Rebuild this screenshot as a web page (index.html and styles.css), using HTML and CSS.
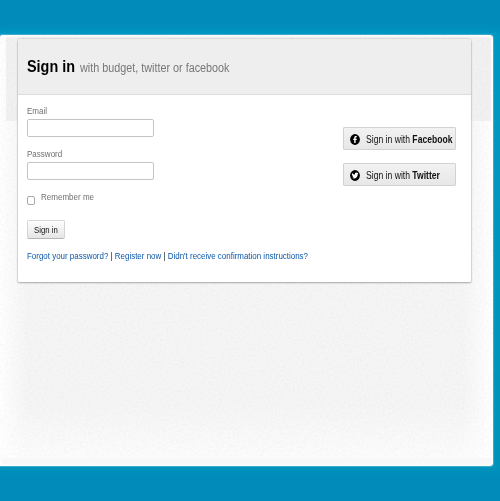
FILE: index.html
```html
<!DOCTYPE html>
<html lang="en">
<head>
<meta charset="utf-8">
<title>Sign in</title>
<link rel="stylesheet" href="styles.css">
</head>
<body>
<main class="page">
  <svg class="grain" aria-hidden="true"><filter id="grain"><feTurbulence type="fractalNoise" baseFrequency="0.45" numOctaves="2"/><feColorMatrix values="0 0 0 0 0.4  0 0 0 0 0.4  0 0 0 0 0.4  0.3 0 0 0 -0.12"/></filter><rect width="100%" height="100%" filter="url(#grain)"/></svg>
  <section class="card">
    <header class="head"><h1 class="t title">Sign in</h1><span class="t subtitle">with budget, twitter or facebook</span></header>
    <div class="body">
      <form class="form">
        <label class="label" for="email"><span class="t small">Email</span></label>
        <input class="field" id="email" type="text">
        <label class="label second" for="password"><span class="t small">Password</span></label>
        <input class="field" id="password" type="password">
        <div class="remember"><input class="check" id="remember" type="checkbox"><label class="t small" for="remember">Remember me</label></div>
        <button class="submit" type="button"><span class="t small">Sign in</span></button>
        <p class="links"><span class="t small"><a>Forgot your password?</a> | <a>Register now</a> | <a>Didn't receive confirmation instructions?</a></span></p>
      </form>
      <div class="social">
        <a class="provider"><svg class="icon" viewBox="0 0 10 11"><ellipse cx="5" cy="5.5" rx="4.9" ry="5.4"/><path fill="#fff" d="M4.2 9V6H3.2V4.7h1V3.8C4.2 2.6 4.8 2 5.8 2h1v1.2h-.6c-.4 0-.6.2-.6.6v.9h1.2L6.7 6H5.6v3z"/></svg><span class="t">Sign in with <b>Facebook</b></span></a>
        <a class="provider"><svg class="icon" viewBox="0 0 10 11"><ellipse cx="5" cy="5.5" rx="4.9" ry="5.4"/><path fill="#fff" d="M2.1 2.9c.8 1 1.7 1.5 2.8 1.6-.2-1.2.5-2 1.4-2 .5 0 .8.2 1.1.5l.9-.4-.5.9.6-.1-.7.8c0 2.5-1.5 4.2-3.6 4.2-.8 0-1.5-.2-2.1-.6.8 0 1.3-.2 1.8-.6-.7-.1-1.1-.5-1.3-1.1h.5c-.7-.2-1.1-.7-1.1-1.5l.5.2c-.6-.5-.7-1.2-.3-1.9z"/></svg><span class="t">Sign in with <b>Twitter</b></span></a>
      </div>
    </div>
  </section>
</main>
</body>
</html>
```
FILE: styles.css
```css
* { box-sizing: border-box; }
body {
  margin: 0;
  height: 501px;
  padding-top: 35px;
  overflow: hidden;
  font-family: "Liberation Sans", Arial, sans-serif;
  background: linear-gradient(#008bbb 0 24px, #0097c2 35px, #0092b8 466px, #008bbb 477px);
}
.page {
  position: relative;
  width: 493px;
  height: 431px;
  padding: 4px 0 0 18px;
  border-radius: 2px 3px 3px 0;
  background:
    linear-gradient(#f1f1f1, #f1f1f1) 6px 2px / 485px 84px no-repeat,
    linear-gradient(#f8f8f8, #f8f8f8) 0 423px / 100% 8px no-repeat,
    linear-gradient(90deg, #fff, rgba(255,255,255,0) 28px, rgba(255,255,255,0) 462px, #fff),
    linear-gradient(#f5f5f5 0 370px, #fcfcfc 423px);
  box-shadow: 0 0 0 1px #3fa9cb, inset 0 0 3px 1px #fff, 0 0 5px #00a3c9;
}
.grain { position: absolute; inset: 0; width: 100%; height: 423px; opacity: .6; }
.card {
  position: relative;
  width: 453px;
  height: 243px;
  border-radius: 3px 3px 1px 1px;
  background: #fff;
  box-shadow: 0 0 1px 1px rgba(0,0,0,.08), 0 1px 2px rgba(0,0,0,.25);
}
.t { display: inline-block; flex: none; white-space: nowrap; transform: scaleX(.9); transform-origin: 0 50%; }
.small { font-size: 9.5px; transform: scaleX(.845); }
.head {
  display: flex;
  align-items: baseline;
  height: 56px;
  padding: 18px 0 0 9px;
  border-bottom: 1px solid #dcdcdc;
  border-radius: 3px 3px 0 0;
  background: #eee;
}
.title { width: 53px; margin: 0; font-size: 16px; line-height: 19px; color: #000; }
.subtitle { font-size: 12px; color: #777; }
.body { display: flex; justify-content: space-between; padding: 0 15px 0 9px; }
.form { width: 290px; padding-top: 10px; }
.label { display: block; height: 14px; font-size: 9px; line-height: 11px; color: #707070; }
.second { margin-top: 11px; }
.field {
  display: block;
  width: 127px;
  height: 18px;
  margin: 0;
  border: 1px solid #c4c4c4;
  border-radius: 2px;
  background: #fff;
}
.remember { display: flex; height: 16px; margin-top: 11px; gap: 6px; font-size: 9px; line-height: 11px; color: #707070; }
.check {
  appearance: none;
  width: 8px;
  height: 9px;
  margin: 5px 0 0 0;
  border: 1px solid #aaa;
  border-radius: 2px;
  background: #fff;
}
.submit {
  display: block;
  width: 38px;
  height: 19px;
  margin: 13px 0 0;
  padding: 0 0 0 6px;
  border: 1px solid #d5d5d5;
  border-bottom-color: #b5b5b5;
  border-radius: 2px;
  background: linear-gradient(#fefefe, #e5e5e5);
  font: 9px/17px "Liberation Sans", Arial, sans-serif;
  color: #111;
  text-align: left;
}
.submit .t { transform: scaleX(.82); }
.links { margin: 11px 0 0; font-size: 9px; line-height: 12px; color: #222; }
.links .t { transform: scaleX(.837); }
.links a { color: #0c58a8; }
.social { display: flex; flex-direction: column; gap: 13px; width: 113px; padding-top: 32px; }
.provider {
  display: flex;
  align-items: center;
  gap: 6px;
  height: 23px;
  padding: 1px 0 0 6px;
  border: 1px solid #d2d2d2;
  border-radius: 1px;
  background: linear-gradient(#f2f2f2, #e7e7e7);
  font-size: 10px;
  color: #111;
}
.provider .t { transform: scaleX(.86); }
.icon { flex: none; width: 10px; height: 11px; }
```
